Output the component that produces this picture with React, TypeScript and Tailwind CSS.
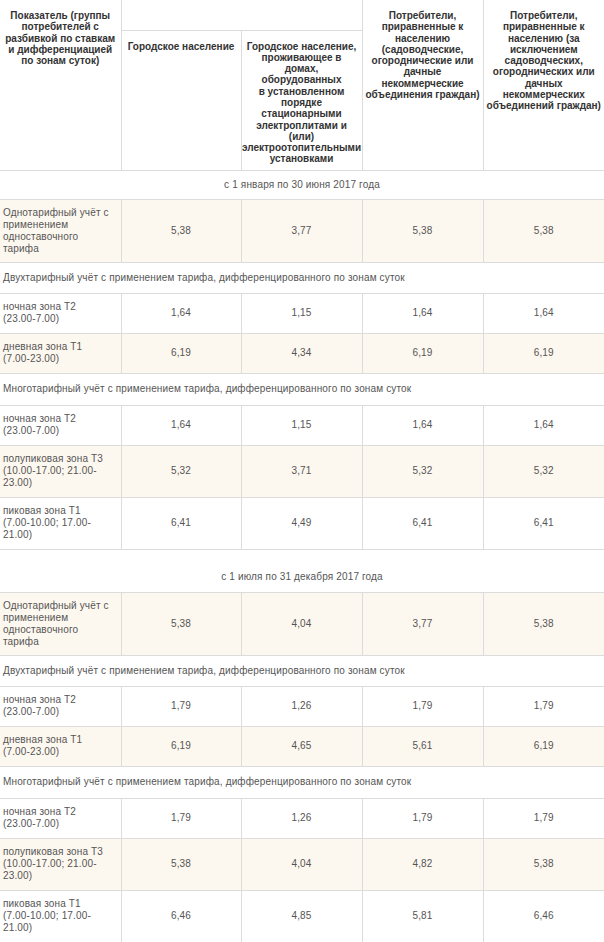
import React from "react";

type Row =
  | { kind: "section"; text: string; h: string; center?: boolean; pad?: string }
  | { kind: "data"; label: string[]; values: string[]; h: string; cream?: boolean };

const single = ["Однотарифный учёт с", "применением", "одноставочного", "тарифа"];
const night = ["ночная зона Т2", "(23.00-7.00)"];
const day = ["дневная зона Т1", "(7.00-23.00)"];
const half = ["полупиковая зона Т3", "(10.00-17.00; 21.00-", "23.00)"];
const peak = ["пиковая зона Т1", "(7.00-10.00; 17.00-", "21.00)"];
const two = "Двухтарифный учёт с применением тарифа, дифференцированного по зонам суток";
const multi = "Многотарифный учёт с применением тарифа, дифференцированного по зонам суток";

const rows: Row[] = [
  { kind: "section", text: "с 1 января по 30 июня 2017 года", h: "h-[29px]", center: true },
  { kind: "data", label: single, values: ["5,38", "3,77", "5,38", "5,38"], h: "h-[63px]", cream: true },
  { kind: "section", text: two, h: "h-[31px]" },
  { kind: "data", label: night, values: ["1,64", "1,15", "1,64", "1,64"], h: "h-[40px]" },
  { kind: "data", label: day, values: ["6,19", "4,34", "6,19", "6,19"], h: "h-[40px]", cream: true },
  { kind: "section", text: multi, h: "h-[32px]" },
  { kind: "data", label: night, values: ["1,64", "1,15", "1,64", "1,64"], h: "h-[40px]" },
  { kind: "data", label: half, values: ["5,32", "3,71", "5,32", "5,32"], h: "h-[52px]", cream: true },
  { kind: "data", label: peak, values: ["6,41", "4,49", "6,41", "6,41"], h: "h-[52px]" },
  { kind: "section", text: "с 1 июля по 31 декабря 2017 года", h: "h-[43px]", center: true, pad: "pt-[13px]" },
  { kind: "data", label: single, values: ["5,38", "4,04", "3,77", "5,38"], h: "h-[63px]", cream: true },
  { kind: "section", text: two, h: "h-[31px]" },
  { kind: "data", label: night, values: ["1,79", "1,26", "1,79", "1,79"], h: "h-[40px]" },
  { kind: "data", label: day, values: ["6,19", "4,65", "5,61", "6,19"], h: "h-[40px]", cream: true },
  { kind: "section", text: multi, h: "h-[32px]" },
  { kind: "data", label: night, values: ["1,79", "1,26", "1,79", "1,79"], h: "h-[40px]" },
  { kind: "data", label: half, values: ["5,38", "4,04", "4,82", "5,38"], h: "h-[52px]", cream: true },
  { kind: "data", label: peak, values: ["6,46", "4,85", "5,81", "6,46"], h: "h-[52px]" },
];

const col3Lines = [
  "Городское население,",
  "проживающее в",
  "домах,",
  "оборудованных",
  "в установленном",
  "порядке",
  "стационарными",
  "электроплитами и",
  "(или)",
  "электроотопительными",
  "установками",
];

function Lines({ lines }: { lines: string[] }) {
  return (
    <>
      {lines.map((l, i) => (
        <div key={i} className="whitespace-nowrap">
          {l}
        </div>
      ))}
    </>
  );
}

export default function App() {
  return (
    <div className="w-[604px] bg-white font-['Liberation_Sans',Arial,sans-serif] text-[10px] leading-[11.5px] text-[#555]">
      <table className="w-full table-fixed border-collapse">
        <colgroup>
          <col className="w-[121px]" />
          <col className="w-[120px]" />
          <col className="w-[121px]" />
          <col className="w-[121px]" />
          <col className="w-[121px]" />
        </colgroup>
        <thead className="font-bold text-[#333] leading-[11.3px]">
          <tr className="h-[30px]">
            <th rowSpan={2} className="border-r border-b border-[#dcdcdc] px-[2px] pt-[10px] align-top text-center font-bold">
              Показатель (группы потребителей с разбивкой по ставкам и дифференциацией по зонам суток)
            </th>
            <th colSpan={2} className="border-r border-b border-[#dcdcdc]"></th>
            <th rowSpan={2} className="border-r border-b border-[#dcdcdc] px-0 pt-[10px] align-top text-center font-bold">
              Потребители, приравненные к населению (садоводческие, огороднические или дачные некоммерческие объединения граждан)
            </th>
            <th rowSpan={2} className="border-b border-[#dcdcdc] px-0 pt-[10px] align-top text-center font-bold">
              Потребители, приравненные к населению (за исключением садоводческих, огороднических или дачных некоммерческих объединений граждан)
            </th>
          </tr>
          <tr className="h-[140px]">
            <th className="border-r border-b border-[#dcdcdc] px-[2px] pt-[10px] align-top text-center font-bold">
              Городское население
            </th>
            <th className="border-r border-b border-[#dcdcdc] px-0 pt-[10px] align-top text-center font-bold">
              <Lines lines={col3Lines} />
            </th>
          </tr>
        </thead>
        <tbody className="tracking-[0.15px]">
          {rows.map((row, i) =>
            row.kind === "section" ? (
              <tr key={i} className={row.h}>
                <td
                  colSpan={5}
                  className={`border-b border-[#dcdcdc] px-[3px] align-middle ${row.center ? "text-center" : "text-left"} ${row.pad ?? ""}`}
                >
                  {row.text}
                </td>
              </tr>
            ) : (
              <tr key={i} className={`${row.h} ${row.cream ? "bg-[#fdf8ef]" : "bg-white"}`}>
                <td className="border-r border-b border-[#dcdcdc] pl-[3px] pr-[2px] align-middle text-left leading-[12px]">
                  <Lines lines={row.label} />
                </td>
                {row.values.map((v, j) => (
                  <td
                    key={j}
                    className={`border-b border-[#dcdcdc] align-middle text-center ${j < 3 ? "border-r" : ""}`}
                  >
                    {v}
                  </td>
                ))}
              </tr>
            )
          )}
        </tbody>
      </table>
    </div>
  );
}
